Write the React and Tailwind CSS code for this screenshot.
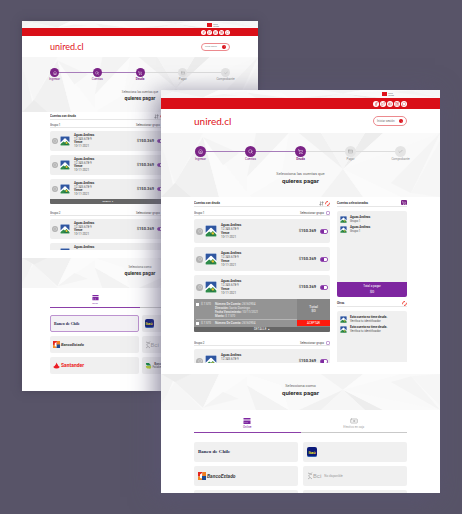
import React from "react";
import {
  House, Search, ShoppingCart, CreditCard, Check, Facebook, Twitter, Youtube, Instagram,
  MessageCircle, ChevronRight, Banknote, Info, ArrowDownUp,
} from "lucide-react";

const large = {
  side: "px-[33px]",
  top: "h-[8px]",
  flag: "h-[6px] gap-[1px] mr-[46px]",
  social: "h-[11px] gap-[1px]",
  dot: "size-[6px]",
  dotIcon: "size-[4px]",
  header: "h-[24px]",
  logo: "text-[10px] leading-[16px]",
  another: "h-[10px] w-[34px] text-[3px] px-[3px]",
  anotherDot: "size-[4px]",
  hero: "h-[64px] pt-[13px]",
  steps: "px-[1px]",
  step: "size-[11px]",
  stepIcon: "size-[5px]",
  track: "top-[5px]",
  stepText: "text-[3px] leading-[4px]",
  heroText: "mt-[8px]",
  small: "text-[4px] leading-[6px]",
  big: "text-[6px] leading-[8px]",
  work: "pt-[4px] h-[177px]",
  list: "flex-[136] mb-[11px]",
  aside: "flex-[70]",
  gap: "gap-[7px]",
  title: "h-[6px] text-[3px] leading-[5px]",
  group: "h-[9px] pt-[3px] text-[3px] leading-[4px]",
  groupTwo: "mt-[6px] h-[8px] pt-[2px] text-[3px] leading-[4px]",
  tick: "size-[4px]",
  cards: "mt-[3px] gap-[4px]",
  card: "h-[24px] pl-[2px] pr-[2px]",
  info: "size-[7px]",
  tile: "size-[12px] ml-[2px]",
  lines: "ml-[4px] text-[3px] leading-[4px] h-[16px]",
  amount: "text-[4px] leading-[6px] mr-[4px]",
  toggle: "w-[8px] h-[5px]",
  strip: "h-[5px] text-[3px] leading-[5px]",
  band: "h-[36px] pt-[4px]",
  tabs: "mt-[7px] h-[16px]",
  tabIcon: "size-[8px]",
  tabText: "text-[3px] leading-[4px]",
  banks: "mt-[9px] gap-x-[5px] gap-y-[4px]",
  bank: "h-[20px] pl-[4px]",
  serif: "text-[5px] leading-[8px]",
  sans: "text-[5px] leading-[8px]",
  mark: "size-[8px]",
  itau: "size-[10px]",
};

const compact = {
  side: "px-[28px]",
  top: "h-[7px]",
  flag: "h-[5px] gap-[1px] mr-[39px]",
  social: "h-[8px] gap-[1px]",
  dot: "size-[5px]",
  dotIcon: "size-[3px]",
  header: "h-[21px]",
  logo: "text-[9px] leading-[13px]",
  another: "h-[8px] w-[29px] text-[2px] px-[3px]",
  anotherDot: "size-[4px]",
  hero: "h-[55px] pt-[11px]",
  steps: "px-0",
  step: "size-[9px]",
  stepIcon: "size-[4px]",
  track: "top-[4px]",
  stepText: "text-[3px] leading-[4px]",
  heroText: "mt-[7px]",
  small: "text-[3px] leading-[5px]",
  big: "text-[5px] leading-[6px]",
  work: "pt-[2px] h-[146px]",
  list: "flex-[115] mb-[8px]",
  aside: "flex-[59]",
  gap: "gap-[6px]",
  title: "h-[6px] text-[3px] leading-[5px]",
  group: "h-[8px] pt-[2px] text-[3px] leading-[4px]",
  groupTwo: "mt-[7px] h-[5px] pt-0 text-[3px] leading-[4px]",
  tick: "size-[3px]",
  cards: "mt-[3px] gap-[4px]",
  card: "h-[20px] pl-[2px] pr-[1px]",
  info: "size-[6px]",
  tile: "size-[10px] ml-[2px]",
  lines: "ml-[4px] text-[3px] leading-[3px] h-[14px]",
  amount: "text-[4px] leading-[6px] mr-[3px]",
  toggle: "w-[7px] h-[4px]",
  strip: "h-[5px] text-[2px] leading-[5px]",
  band: "h-[30px] pt-[2px]",
  tabs: "mt-[6px] h-[14px]",
  tabIcon: "size-[7px]",
  tabText: "text-[2px] leading-[4px]",
  banks: "mt-[7px] gap-x-[3px] gap-y-[4px]",
  bank: "h-[17px] pl-[3px]",
  serif: "text-[4px] leading-[7px]",
  sans: "text-[4px] leading-[7px]",
  mark: "size-[7px]",
  itau: "size-[9px]",
};

function Facets({ flip }) {
  return (
    <svg className="absolute inset-0 -z-10 size-full" viewBox="0 0 279 64" preserveAspectRatio="none" aria-hidden="true">
      <rect width="279" height="64" fill="#f9f9f9" />
      <g transform={flip ? "translate(0 64) scale(1 -1)" : undefined}>
        <path d="M0 0 12 52 0 64Z" fill="#f3f3f3" />
        <path d="M0 12 14 50 42 0 0 0Z" fill="#f6f6f6" />
        <path d="M14 50 42 4 58 64 10 64Z" fill="#f1f1f1" />
        <path d="M14 50 30 64 0 64Z" fill="#ececec" />
        <path d="M42 4 90 64 58 64Z" fill="#fbfbfb" />
        <path d="M42 4 78 20 62 32Z" fill="#f4f4f4" />
        <path d="M95 0 128 0 86 44Z" fill="#f3f3f3" />
        <path d="M128 0 120 44 86 64 86 44Z" fill="#fbfbfb" />
        <path d="M138 0 160 0 182 36Z" fill="#f1f1f1" />
        <path d="M204 0 222 0 182 36Z" fill="#ededed" />
        <path d="M160 0 204 0 182 36Z" fill="#f6f6f6" />
        <path d="M182 36 202 64 160 64Z" fill="#f3f3f3" />
        <path d="M182 36 240 64 202 64Z" fill="#fbfbfb" />
        <path d="M279 0 250 60 230 50Z" fill="#f4f4f4" />
        <path d="M279 8 279 64 250 60Z" fill="#f6f6f6" />
        <path d="M222 0 279 0 182 36Z" fill="#fafafa" />
      </g>
    </svg>
  );
}

function Mountain({ className }) {
  return (
    <svg viewBox="0 0 20 20" className={className} aria-hidden="true">
      <rect width="20" height="20" fill="#fff" />
      <rect x="1" y="1" width="18" height="12" fill="#2f56a0" />
      <path d="M1 13 9 5q1-1 2 0l8 8v2H1Z" fill="#fff" />
      <path d="M1 19v-3l6-5 3 2 3-3 6 6v3Z" fill="#2e8b4a" />
      <path d="M8 17q3-6 6-2l2 3Z" fill="#1f6f43" />
      <circle cx="13" cy="14" r="2" fill="#e8c52d" />
    </svg>
  );
}

function Ring() {
  return (
    <svg viewBox="0 0 10 10" className="size-[5px]" fill="none" stroke="#f04438" strokeWidth="2" aria-hidden="true">
      <path d="M1.4 6.5A4 4 0 0 1 6 1.2M8.6 3.5A4 4 0 0 1 4 8.8" />
    </svg>
  );
}

function Tick({ label, t }) {
  return (
    <input type="checkbox" aria-label={label} className={`${t.tick} appearance-none rounded-[1px] border border-[#c4a0d4] bg-white`} />
  );
}

const steps = [
  ["Ingresar", House],
  ["Cuentas", Search],
  ["Deuda", ShoppingCart],
  ["Pagar", CreditCard],
  ["Comprobante", Check],
];

function Steps({ t }) {
  return (
    <ol className={`relative flex justify-between ${t.steps}`}>
      <li aria-hidden="true" className={`absolute inset-x-[5px] h-px bg-[#dddddd] ${t.track}`} />
      <li aria-hidden="true" className={`absolute left-[5px] right-1/2 h-px bg-[#a77cba] ${t.track}`} />
      {steps.map(([name, Icon], i) => (
        <li key={name} className={`relative flex flex-col items-center ${t.step}`}>
          <span className={`flex shrink-0 items-center justify-center rounded-full ${t.step} ${i < 3 ? "bg-[#7b2386] text-white" : "bg-[#e4e4e4] text-[#9a9a9a]"}`}>
            <Icon className={t.stepIcon} strokeWidth={2} />
          </span>
          <span className={`whitespace-nowrap ${t.stepText} ${i === 2 ? "font-bold" : ""} ${i < 3 ? "text-[#7b2386]" : "text-[#8c8c8c]"}`}>{name}</span>
        </li>
      ))}
    </ol>
  );
}

const cardLines = ["Aguas Andinas", "12.345.678-9", "Vence", "10-11-2021"];

function Card({ t, joined, lines = 4 }) {
  return (
    <article className={`flex shrink-0 items-center bg-[#efefef] ${joined ? "rounded-t-[2px]" : "rounded-[2px]"} ${t.card}`}>
      <span className={`flex items-center justify-center rounded-full bg-[#b3b3b3] text-[#e8e8e8] ${t.info}`}>
        <Info className="size-[4px]" />
      </span>
      <span className={`rounded-[1px] bg-white ${t.tile}`}>
        <Mountain className="size-full" />
      </span>
      <div className={`grid flex-1 grid-rows-4 whitespace-nowrap text-[#555555] ${t.lines}`}>
        {cardLines.slice(0, lines).map((line, i) => (
          <span key={line} className={i % 2 ? "" : "font-bold text-[#333333]"}>{line}</span>
        ))}
      </div>
      {lines > 1 && (
        <>
          <span className={`font-bold text-[#333333] ${t.amount}`}><span className="font-normal">$</span>150.369</span>
          <input
            type="checkbox"
            aria-label="Pagar cuenta"
            className={`appearance-none rounded-[2px] border border-[#9a55b5] bg-[linear-gradient(90deg,#7e2aa0_50%,#ffffff_50%)] ${t.toggle}`}
          />
        </>
      )}
    </article>
  );
}

function GroupHead({ t, name, className }) {
  return (
    <div className={`flex shrink-0 items-center justify-between border-b border-[#e6e6e6] text-[#444444] ${className}`}>
      <span>{name}</span>
      <span className="flex items-center gap-[2px]">Seleccionar grupo <Tick label={`Seleccionar ${name}`} t={t} /></span>
    </div>
  );
}

function DebtRow({ first }) {
  return (
    <div className="flex pl-[2px] text-[3px] leading-[4px] text-[#e6e6e6]">
      <label className="flex h-[4px] w-[19px] items-center gap-[2px] whitespace-nowrap">
        <input type="checkbox" className="size-[3px] appearance-none bg-white" />
        $ 7.570
      </label>
      <div className="flex flex-col whitespace-nowrap">
        <span><b>Número De Cuenta:</b> 26160904</span>
        {first && (
          <>
            <span><b>Dirección:</b> Santo Domingo</span>
            <span><b>Fecha Vencimiento:</b> 10/11/2021</span>
            <span><b>Monto:</b> $ 7.570</span>
          </>
        )}
      </div>
    </div>
  );
}

function Detail() {
  return (
    <div className="flex h-[28px] overflow-hidden bg-[#949494]">
      <div className="flex-[103] pt-[3px]">
        <DebtRow first />
        <hr className="my-[1px] ml-[2px] border-[#b5b5b5]" />
        <DebtRow />
      </div>
      <div className="flex flex-[33] flex-col bg-[#858585] text-center text-[4px] leading-[4px] text-white">
        <span className="pt-[6px]">Total</span>
        <span>$0</span>
        <button className="mt-auto mb-[1px] h-[6px] bg-[#ff1a0d] text-[3px] leading-[6px] text-white">ACEPTAR</button>
      </div>
    </div>
  );
}

function Strip({ t }) {
  return <button className={`block w-full rounded-b-[1px] bg-[#666666] text-center text-white ${t.strip}`}>DETALLE &nbsp;▴</button>;
}

function Account({ title, sub }) {
  return (
    <li className="flex items-center gap-[3px]">
      <Mountain className="size-[7px]" />
      <span className="flex flex-col whitespace-nowrap text-[3px] leading-[4px] text-[#555555]">
        <b className="text-[#333333]">{title}</b>
        <span>{sub}</span>
      </span>
    </li>
  );
}

function Summary({ t }) {
  return (
    <aside className={`mb-[12px] flex flex-col ${t.aside}`}>
      <div className={`flex items-center justify-between border-b border-[#e6e6e6] font-bold text-[#444444] ${t.title}`}>
        <h2>Cuentas seleccionadas</h2>
        <span className="mb-[2px] flex h-[5px] w-[6px] items-center justify-center rounded-[1px] bg-[#7b2386] text-white"><ShoppingCart className="size-[4px]" /></span>
      </div>
      <div className="mt-[4px] flex h-[86px] flex-col overflow-hidden rounded-[2px] bg-[#f0f0f0]">
        <ul className="flex flex-col gap-[2px] pl-[3px] pt-[4px]">
          <Account title="Aguas Andinas" sub="Grupo 1" />
          <Account title="Aguas Andinas" sub="Grupo 1" />
        </ul>
        <button className="mt-auto h-[15px] bg-[#7e26a0] text-center text-white">
          <span className="block text-[3px] leading-[5px]">Total a pagar</span>
          <span className="block text-[4px] leading-[6px]">$0</span>
        </button>
      </div>
      <div className="mt-[3px] flex h-[7px] items-center justify-between border-b border-[#e6e6e6] text-[3px] leading-[5px] font-bold text-[#444444]">
        <h2>Otros</h2>
        <Ring />
      </div>
      <ul className="mt-[4px] flex flex-1 flex-col gap-[2px] rounded-t-[2px] bg-[#f0f0f0] pl-[3px] pt-[4px]">
        <Account title="Esta cuenta no tiene deuda." sub="Verifica tu identificador" />
        <Account title="Esta cuenta no tiene deuda." sub="Verifica tu identificador" />
      </ul>
    </aside>
  );
}

function Heading({ t, first, className }) {
  return (
    <div className={`text-center whitespace-nowrap ${className}`}>
      <p className={`text-[#666666] ${t.small}`}>{first}</p>
      <p className={`font-bold text-[#2b2b2b] ${t.big}`}>quieres pagar</p>
    </div>
  );
}

const chile = (t) => <span className={`font-['Liberation_Serif',serif] font-bold text-[#1d2748] ${t.serif}`}>Banco de Chile</span>;
const itau = (t) => (
  <span className={`flex items-end justify-center rounded-[2px] border-b border-[#2c62b5] bg-[#0b1a7a] text-[4px] leading-[6px] font-bold text-[#f5e21a] ${t.itau}`}>Itaú</span>
);
const estado = (t) => (
  <span className="flex items-center gap-[1px]">
    <svg viewBox="0 0 16 16" className={t.mark} aria-hidden="true">
      <rect width="9" height="9" fill="#e5251d" /><rect x="9" width="7" height="9" fill="#f08020" />
      <rect y="9" width="8" height="7" fill="#f08a24" /><rect x="8" y="8" width="8" height="8" fill="#1c4b96" />
      <path d="M4 5 8 2v11l-4-1Z" fill="#fff" />
    </svg>
    <span className={`font-bold italic text-[#444444] ${t.sans}`}>BancoEstado</span>
  </span>
);
const bci = () => (
  <span className="flex items-center gap-[3px]">
    <span className="flex items-center text-[#a5a5a5]">
      <svg viewBox="0 0 12 16" className="h-[8px] w-[6px]" fill="none" stroke="currentColor" strokeWidth="1.5" aria-hidden="true"><path d="M2 2 10 5M10 1 3 8l7 6M2 14l4-3" /></svg>
      <span className="text-[6px] leading-[8px]">Bci</span>
    </span>
    <span className="text-[3px] leading-[4px] whitespace-nowrap text-[#9a9a9a]">No disponible</span>
  </span>
);
const santander = (t) => (
  <span className="flex items-center gap-[1px] text-[#ec1c24]">
    <svg viewBox="0 0 16 16" className={t.mark} fill="currentColor" aria-hidden="true"><path d="M8 1q1 3 3 5 1 1 1 3 4 1 3 3-2 3-7 3t-7-3q-1-2 3-3 0-2 2-3 1-2 2-5Z" /></svg>
    <span className="text-[5px] leading-[7px] font-bold">Santander</span>
  </span>
);
const falabella = (t) => (
  <span className="flex items-center gap-[1px]">
    <svg viewBox="0 0 16 16" className={t.mark} aria-hidden="true"><path d="M2 2h7l5 6H6q-4 0-4-6Z" fill="#0b8a3d" /><path d="M2 9h12v4q-1 3-5 2Q2 15 2 9Z" fill="#b9d531" /></svg>
    <span className="text-[3px] leading-[3px] text-[#555555]"><b className="block">Banco</b>Falabella</span>
  </span>
);

function Screen({ t, detailed }) {
  const banks = detailed ? [chile, itau, estado, bci] : [chile, itau, estado, bci, santander, falabella];
  return (
    <div className="flex flex-col bg-white">
      <div className={`relative isolate flex items-center justify-end overflow-hidden ${t.top}`}>
        <Facets flip />
        <span className={`flex items-center ${t.flag}`}>
          <span className="h-[4px] w-[5px] bg-[#e0121b]" />
          <span className="text-[2px] leading-[2px] text-[#666666]">Chile<br />Unired</span>
        </span>
      </div>
      <div className={`flex items-center justify-end bg-[#d90f18] ${t.side} ${t.social}`}>
        {[Facebook, Twitter, Youtube, Instagram, MessageCircle].map((Icon, i) => (
          <a key={i} href="#social" aria-label={["Facebook", "Twitter", "YouTube", "Instagram", "WhatsApp"][i]} className={`flex items-center justify-center rounded-full bg-white text-[#d90f18] ${t.dot}`}>
            <Icon className={t.dotIcon} strokeWidth={2} />
          </a>
        ))}
      </div>
      <header className={`flex items-center justify-between ${t.side} ${t.header}`}>
        <a href="#inicio" className={`font-['Lato',sans-serif] text-[#e0121b] ${t.logo}`}>unired.cl</a>
        <button className={`flex items-center justify-between rounded-full border border-[#ec8a8e] whitespace-nowrap text-[#777777] ${t.another}`}>
          Iniciar sesión
          <span className={`flex items-center justify-center rounded-full bg-[#d90f18] text-white ${t.anotherDot}`}><ChevronRight className="size-[3px]" /></span>
        </button>
      </header>
      <section className={`relative isolate ${t.side} ${t.hero}`}>
        <Facets />
        <Steps t={t} />
        <Heading t={t} first="Selecciona las cuentas que" className={`pt-[6px] ${t.heroText}`} />
      </section>
      <main className={`flex ${t.side} ${t.work} ${t.gap}`}>
        <section className={`flex flex-col overflow-hidden ${t.list}`}>
          <div className={`flex shrink-0 items-center justify-between border-b border-[#e6e6e6] font-bold text-[#444444] ${t.title}`}>
            <h2>Cuentas con deuda</h2>
            <span className="flex items-center gap-[1px]">
              <ArrowDownUp className="size-[5px]" />
              <Ring />
            </span>
          </div>
          <GroupHead t={t} name="Grupo 1" className={t.group} />
          <div className={`flex shrink-0 flex-col ${t.cards}`}>
            <Card t={t} />
            <Card t={t} />
            <div>
              <Card t={t} joined />
              {detailed && <Detail />}
              <Strip t={t} />
            </div>
          </div>
          <GroupHead t={t} name="Grupo 2" className={t.groupTwo} />
          <div className={`flex flex-col ${t.cards}`}>
            {!detailed && <Card t={t} />}
            <Card t={t} lines={detailed ? 2 : 1} />
          </div>
        </section>
        {detailed ? <Summary t={t} /> : <div className={t.aside} />}
      </main>
      <section className={`relative isolate ${t.band}`}>
        <Facets flip />
        <Heading t={t} first="Selecciona como" className="pt-[5px]" />
      </section>
      <nav className={`flex ${t.side}`}>
        <button className={`flex flex-1 flex-col items-center border-b border-[#8b3fa8] text-[#7e26a0] ${t.tabs}`}>
          <svg viewBox="0 0 16 16" className={t.tabIcon} fill="currentColor" aria-hidden="true"><path d="M1 2h14v3H1ZM1 7h14v7H1Z" /><path d="M3 11h2v1H3Zm4 0h2v1H7Z" fill="#fff" /></svg>
          <span className={t.tabText}>Online</span>
        </button>
        <button className={`flex flex-1 flex-col items-center border-b border-[#c9c9c9] text-[#a8a8a8] ${t.tabs}`}>
          <Banknote className={t.tabIcon} />
          <span className={t.tabText}>Efectivo en caja</span>
        </button>
      </nav>
      <div className={`grid grid-cols-2 ${t.side} ${t.banks} ${detailed ? "" : "pb-[17px]"}`}>
        {banks.map((draw, i) => (
          <button key={i} className={`flex items-center rounded-[2px] ${t.bank} ${!detailed && i === 0 ? "border border-[#bd93d0] bg-[#f3f1f5]" : "bg-[#f0f0f0]"}`}>
            {draw(t)}
          </button>
        ))}
        {detailed && (
          <>
            <span className="h-[3px] rounded-t-[2px] bg-[#f0f0f0]" />
            <span className="h-[3px] rounded-t-[2px] bg-[#f0f0f0]" />
          </>
        )}
      </div>
    </div>
  );
}

export default function App() {
  return (
    <div className="relative h-screen overflow-hidden bg-[#585468] font-['Roboto',sans-serif]">
      <div className="absolute top-[21px] right-[204px] left-[22px] shadow-[0_0_8px_rgba(60,56,75,0.5)]">
        <Screen t={compact} />
      </div>
      <div className="absolute top-[90px] right-[22px] left-[161px] shadow-[-5px_4px_24px_rgba(88,84,116,0.7)]">
        <Screen t={large} detailed />
      </div>
    </div>
  );
}
